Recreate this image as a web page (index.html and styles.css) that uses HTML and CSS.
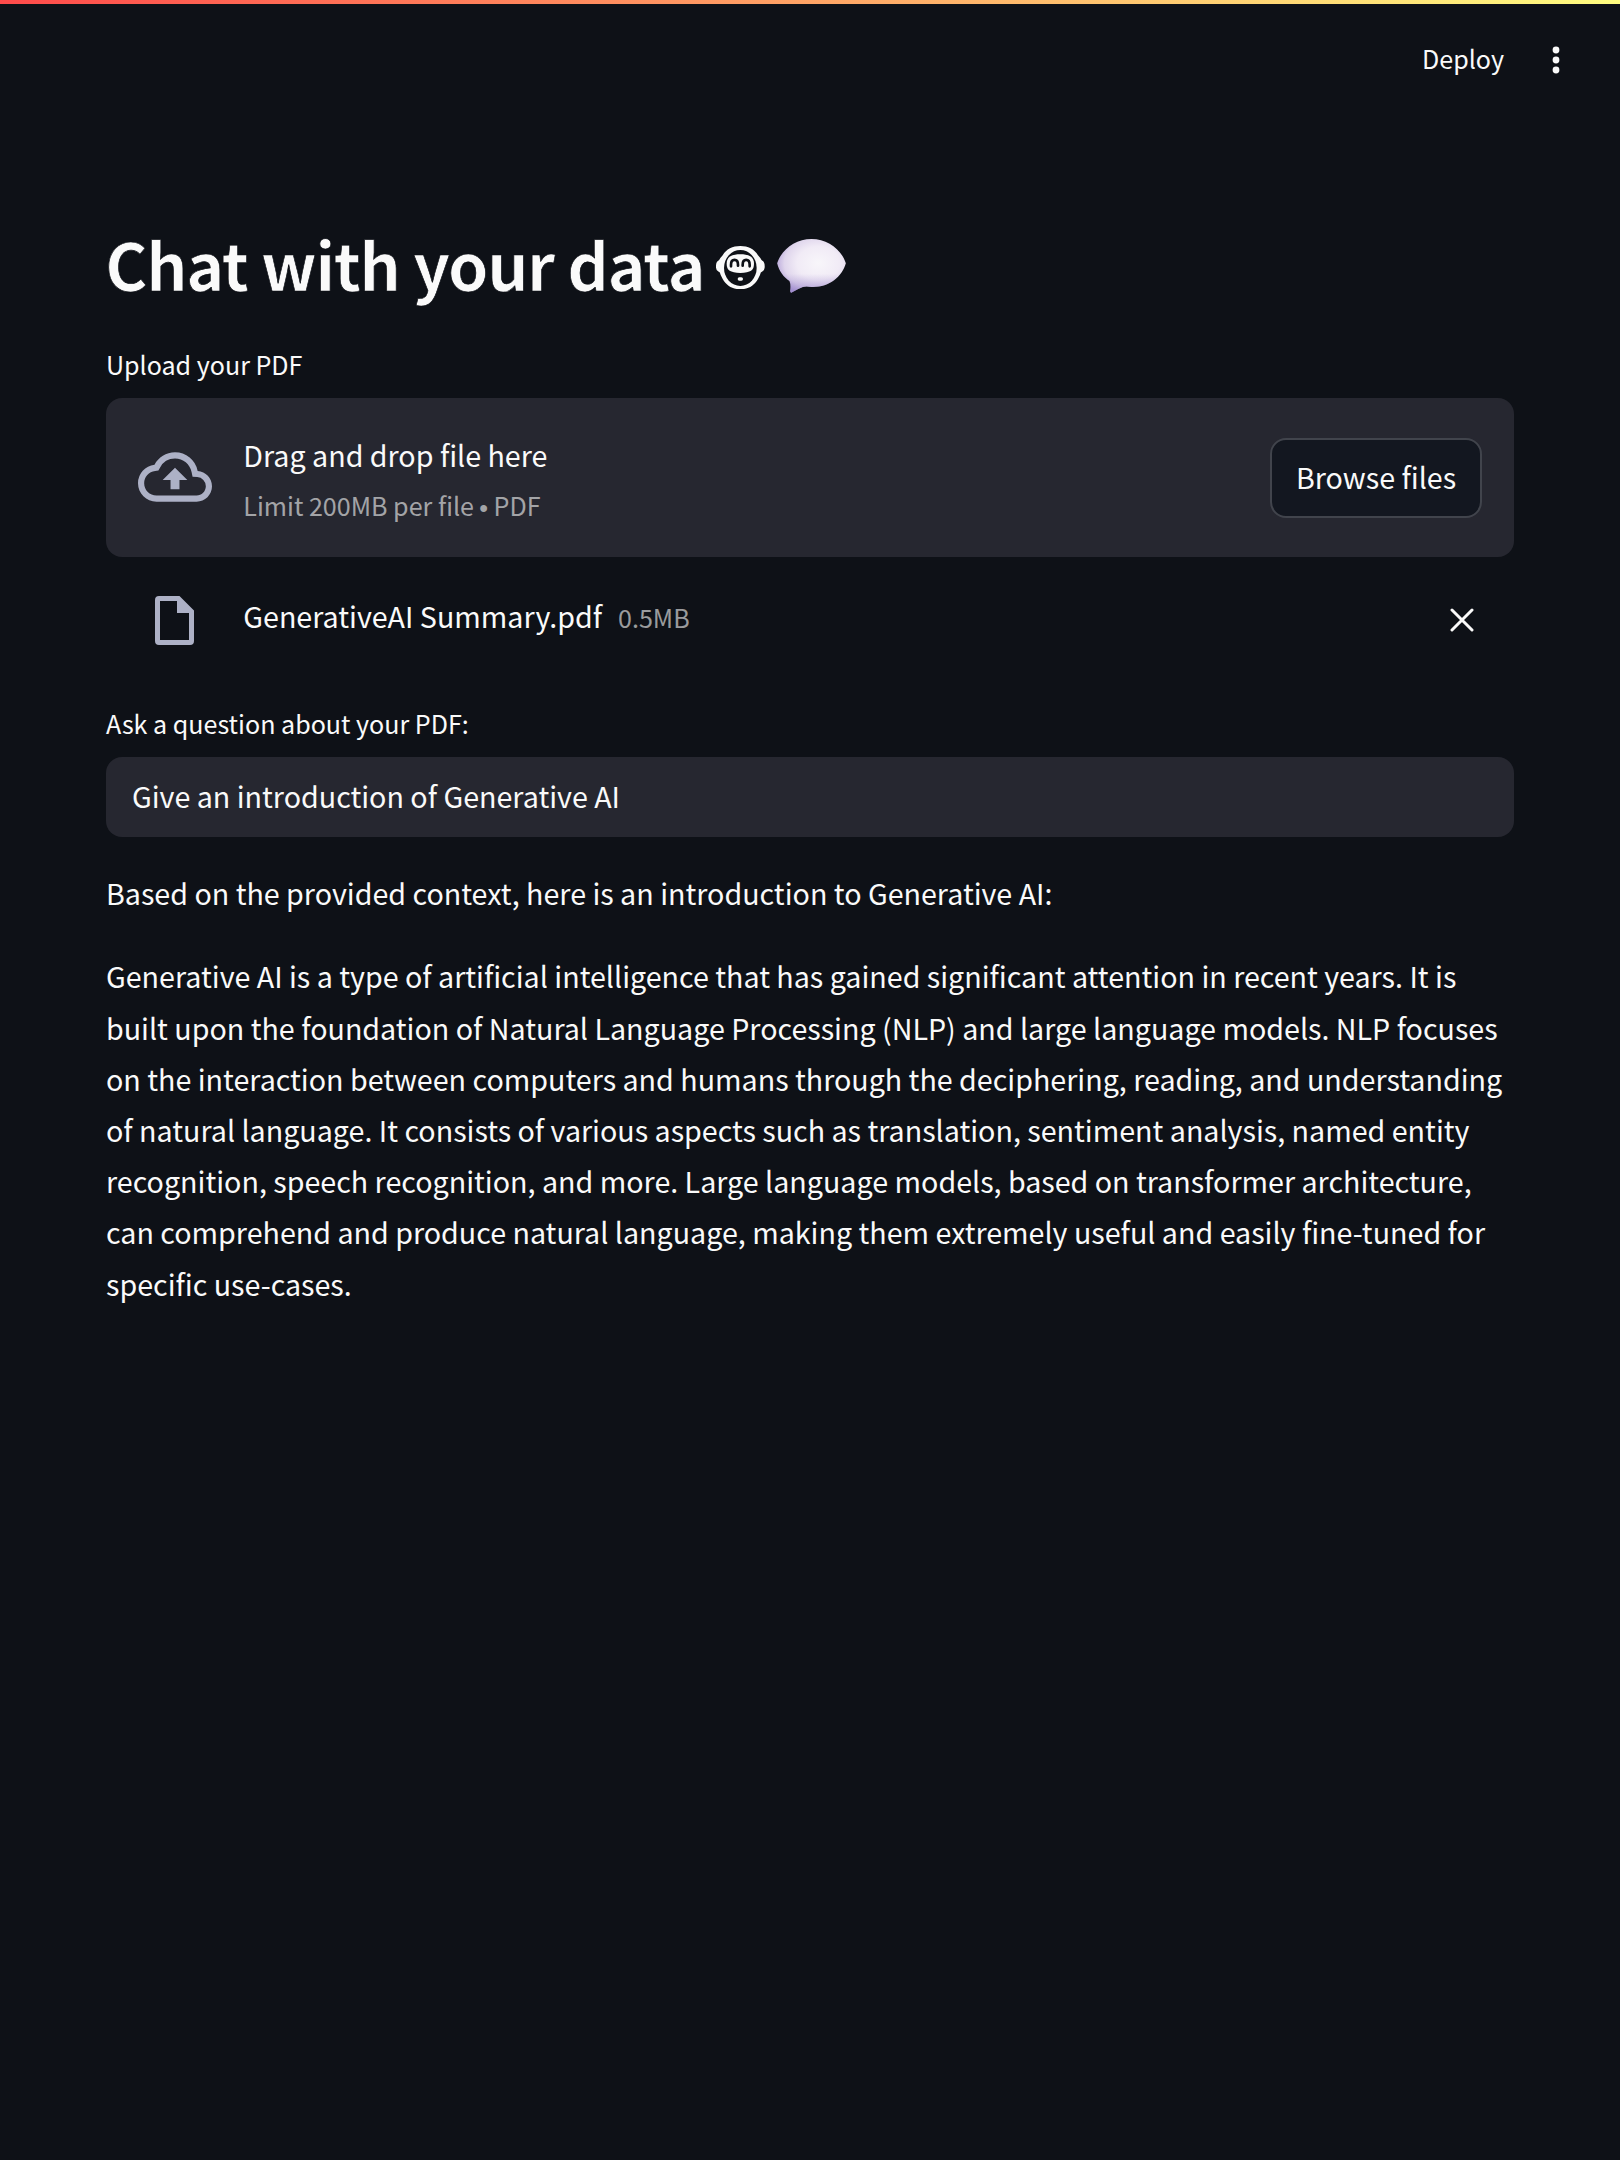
FILE: index.html
```html
<!DOCTYPE html>
<html lang="en">
<head>
<meta charset="utf-8">
<title>Chat with your data</title>
<link rel="stylesheet" href="styles.css">
</head>
<body>
<div class="decoration"></div>
<header class="toolbar">
  <span class="deploy">Deploy</span>
  <svg class="menu" viewBox="0 0 8 28" width="8" height="28"><circle cx="4" cy="4" r="3.4"/><circle cx="4" cy="14" r="3.4"/><circle cx="4" cy="24" r="3.4"/></svg>
</header>
<main class="main">
  <h1 class="title"><span class="title-text">Chat with your data</span>
    <svg class="robot" viewBox="78 77 147 130" width="49" height="43.3">
      <path fill="#fafafa" d="M151 77C174 77 193 86 204 105L211 113Q214 121 221 124Q225 131 224 142Q223 150 218 153Q211 155 210 164L204 176C193 196 174 207 151 207C128 207 109 196 98 176L92 164Q91 155 84 153Q79 150 78 142Q77 131 81 124Q88 121 91 113L98 105C109 86 128 77 151 77Z"/>
      <ellipse cx="151" cy="143" rx="49" ry="54" fill="#0e1117"/>
      <path fill="#fafafa" d="M151 102C179 102 192 111 192 130C192 150 182 156 151 158C120 156 110 150 110 130C110 111 123 102 151 102Z"/>
      <path fill="none" stroke="#0e1117" stroke-width="8" stroke-linecap="round" d="M123 138V133C123 114 144 114 144 133V136M158 136V133C158 114 179 114 179 133V138"/>
      <rect x="143" y="171" width="16" height="10" rx="5" fill="#fafafa"/>
    </svg>
    <svg class="balloon" viewBox="0 0 206 161" width="69" height="53.7">
      <defs>
        <radialGradient id="shell" cx=".6" cy=".45" r=".62"><stop offset="0" stop-color="#f8f6fa"/><stop offset=".5" stop-color="#f1ebf6"/><stop offset=".8" stop-color="#dfd5ec"/><stop offset="1" stop-color="#b9a8da"/></radialGradient>
        <linearGradient id="shade" x1="0" y1="0" x2="0" y2="1"><stop offset=".65" stop-color="#9c87cd" stop-opacity="0"/><stop offset="1" stop-color="#8f79c6" stop-opacity=".6"/></linearGradient>
      </defs>
      <path fill="url(#shell)" d="M0 73C12 33 54 0 103 0C152 0 194 33 206 73C194 115 154 146 103 144C91 142 84 142 77 144Q61 150 45 160Q40 163 39 156Q42 138 37 126C20 115 6 98 0 73Z"/>
      <path fill="url(#shade)" d="M0 73C12 33 54 0 103 0C152 0 194 33 206 73C194 115 154 146 103 144C91 142 84 142 77 144Q61 150 45 160Q40 163 39 156Q42 138 37 126C20 115 6 98 0 73Z"/>
    </svg>
  </h1>
  <div class="label">Upload your PDF</div>
  <section class="dropzone">
    <svg class="cloud" viewBox="0 0 24 24" width="74" height="74"><path d="M19.35 10.04A7.49 7.49 0 0 0 12 4C9.11 4 6.6 5.64 5.35 8.04A5.994 5.994 0 0 0 0 14c0 3.31 2.69 6 6 6h13c2.76 0 5-2.24 5-5 0-2.64-2.05-4.78-4.65-4.96zM19 18H6c-2.21 0-4-1.79-4-4 0-2.05 1.53-3.76 3.56-3.97l1.07-.11.5-.95A5.469 5.469 0 0 1 12 6c2.62 0 4.88 1.86 5.39 4.43l.3 1.5 1.53.11A2.98 2.98 0 0 1 22 15c0 1.65-1.35 3-3 3zM8 13h2.55v3h2.9v-3H16l-4-4z"/></svg>
    <div class="instructions">
      <div class="drag">Drag and drop file here</div>
      <div class="limit">Limit 200MB per file <span class="dot">•</span> PDF</div>
    </div>
    <button class="browse"><span>Browse files</span></button>
  </section>
  <div class="file">
    <svg class="doc" viewBox="0 0 39 49" width="39" height="49"><path fill-rule="evenodd" d="M4 0H24.5L39 14.5V45Q39 49 35 49H4Q0 49 0 45V4Q0 0 4 0ZM5 5V44H34V17H22V5Z"/></svg>
    <span class="name">GenerativeAI Summary.pdf</span>
    <span class="size">0.5MB</span>
    <svg class="close" viewBox="0 0 24 24" width="24" height="24"><path d="M2 2L22 22M22 2L2 22"/></svg>
  </div>
  <div class="label question">Ask a question about your PDF:</div>
  <div class="input"><span>Give an introduction of Generative AI</span></div>
  <div class="answer">
    <p>Based on the provided context, here is an introduction to Generative AI:</p>
    <p>Generative AI is a type of artificial intelligence that has gained significant attention in recent years. It is<br>built upon the foundation of Natural Language Processing (NLP) and large language models. NLP focuses<br>on the interaction between computers and humans through the deciphering, reading, and understanding<br>of natural language. It consists of various aspects such as translation, sentiment analysis, named entity<br>recognition, speech recognition, and more. Large language models, based on transformer architecture,<br>can comprehend and produce natural language, making them extremely useful and easily fine-tuned for<br>specific use-cases.</p>
  </div>
</main>
</body>
</html>
```
FILE: styles.css
```css
* { box-sizing: border-box; }
body {
  margin: 0;
  height: 2160px;
  background: #0e1117;
  color: #fafafa;
  font-family: "Noto Sans CJK SC", "Noto Sans CJK JP", "Open Sans", sans-serif;
  font-size: 28.65px;
  line-height: 51.2px;
  white-space: nowrap;
  overflow: hidden;
}
.decoration { height: 4px; background: linear-gradient(90deg, #ff4b4b, #fffd80); }
.toolbar {
  height: 116px;
  padding: 0 60px 4px 0;
  display: flex;
  align-items: center;
  justify-content: flex-end;
  gap: 48px;
}
.deploy { font-size: 25.07px; line-height: 45px; margin-bottom: 3px; }
.menu { fill: #fafafa; }
.main { padding: 100px 106px 0; }
.title {
  margin: 0 0 36px;
  height: 86px;
  display: flex;
  font-size: 64.6px;
  line-height: 86px;
  font-weight: 700;
}
.title-text { margin-left: -.8px; letter-spacing: -1.34px; -webkit-text-stroke: .7px #0e1117; }
.robot { margin: 26px 0 0 11.5px; }
.balloon { margin: 19.2px 0 0 12.3px; }
.label { font-size: 25.07px; line-height: 45px; margin-bottom: 11px; }
.dropzone {
  height: 159px;
  padding: 0 32px;
  display: flex;
  align-items: center;
  background: #262730;
  border-radius: 16px;
}
.cloud { fill: #adb1c6; margin: 0 31.3px 2px 0; }
.instructions { flex: 1; padding-top: 5px; line-height: 50px; }
.limit { font-size: 25.07px; color: rgba(250, 250, 250, .6); }
.dot { margin: 0 -.2px; font-family: "Liberation Sans", sans-serif; line-height: 1; vertical-align: -.5px; }
.browse {
  width: 212px;
  height: 80px;
  padding: 0 0 1px;
  background: #131720;
  border: 2px solid #41444c;
  border-radius: 16px;
  color: inherit;
  font: inherit;
}
.file { height: 128px; padding: 0 40px 0 49px; display: flex; align-items: center; }
.doc { fill: #adb1c6; margin: 0 49.3px 1px 0; }
.name { margin-bottom: 10px; }
.size { font-size: 25.07px; color: rgba(250, 250, 250, .6); margin: 0 auto 6px 16px; }
.close { fill: none; stroke: #fafafa; stroke-width: 3; stroke-linecap: round; margin-bottom: 2px; }
.question { margin-top: 16px; }
.input {
  height: 80px;
  padding: 0 26px 3px;
  display: flex;
  align-items: center;
  background: #262730;
  border-radius: 16px;
}
.answer { padding-top: 30.2px; }
.answer p { margin: 0 0 32px; }
```
